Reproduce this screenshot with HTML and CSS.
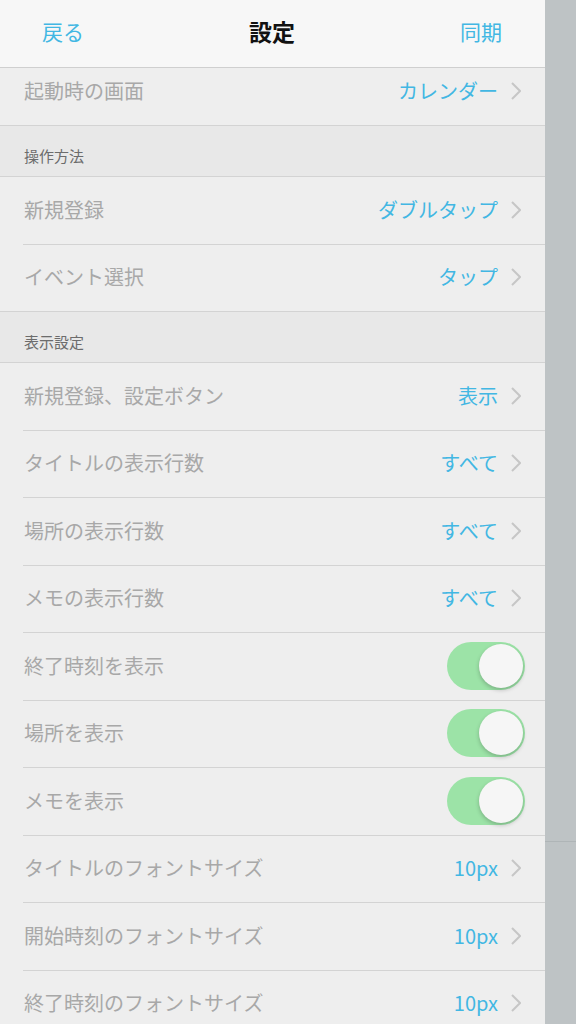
FILE: index.html
```html
<!DOCTYPE html>
<html>
<head>
    <title>設定</title>
    <link rel="stylesheet" href="styles.css">
</head>
<body>
    <div class="screen">
        <div class="panel">
            <div class="navbar">
                <span class="nav-btn">戻る</span>
                <span class="nav-title">設定</span>
                <span class="nav-btn">同期</span>
            </div>

            <div class="row row-partial last">
                <span class="label">起動時の画面</span>
                <span class="value">カレンダー</span>
                <svg class="chevron" viewBox="0 0 10 18"><polyline points="1,1 9,9 1,17"/></svg>
            </div>

            <div class="section-head">操作方法</div>
            <div class="row">
                <span class="label">新規登録</span>
                <span class="value">ダブルタップ</span>
                <svg class="chevron" viewBox="0 0 10 18"><polyline points="1,1 9,9 1,17"/></svg>
            </div>
            <div class="row last">
                <span class="label">イベント選択</span>
                <span class="value">タップ</span>
                <svg class="chevron" viewBox="0 0 10 18"><polyline points="1,1 9,9 1,17"/></svg>
            </div>

            <div class="section-head">表示設定</div>
            <div class="row">
                <span class="label">新規登録、設定ボタン</span>
                <span class="value">表示</span>
                <svg class="chevron" viewBox="0 0 10 18"><polyline points="1,1 9,9 1,17"/></svg>
            </div>
            <div class="row">
                <span class="label">タイトルの表示行数</span>
                <span class="value">すべて</span>
                <svg class="chevron" viewBox="0 0 10 18"><polyline points="1,1 9,9 1,17"/></svg>
            </div>
            <div class="row">
                <span class="label">場所の表示行数</span>
                <span class="value">すべて</span>
                <svg class="chevron" viewBox="0 0 10 18"><polyline points="1,1 9,9 1,17"/></svg>
            </div>
            <div class="row">
                <span class="label">メモの表示行数</span>
                <span class="value">すべて</span>
                <svg class="chevron" viewBox="0 0 10 18"><polyline points="1,1 9,9 1,17"/></svg>
            </div>
            <div class="row">
                <span class="label">終了時刻を表示</span>
                <span class="toggle on"><span class="knob"></span></span>
            </div>
            <div class="row">
                <span class="label">場所を表示</span>
                <span class="toggle on"><span class="knob"></span></span>
            </div>
            <div class="row">
                <span class="label">メモを表示</span>
                <span class="toggle on"><span class="knob"></span></span>
            </div>
            <div class="row">
                <span class="label">タイトルのフォントサイズ</span>
                <span class="value">10px</span>
                <svg class="chevron" viewBox="0 0 10 18"><polyline points="1,1 9,9 1,17"/></svg>
            </div>
            <div class="row">
                <span class="label">開始時刻のフォントサイズ</span>
                <span class="value">10px</span>
                <svg class="chevron" viewBox="0 0 10 18"><polyline points="1,1 9,9 1,17"/></svg>
            </div>
            <div class="row">
                <span class="label">終了時刻のフォントサイズ</span>
                <span class="value">10px</span>
                <svg class="chevron" viewBox="0 0 10 18"><polyline points="1,1 9,9 1,17"/></svg>
            </div>
        </div>
        <div class="backdrop">
            <div class="backdrop-line"></div>
        </div>
    </div>
</body>
</html>
```

FILE: styles.css
```css
body { margin: 0; font-family: "Noto Sans CJK JP", "Noto Sans", sans-serif; background: #bec3c5; overflow: hidden; }
.screen { display: flex; height: 1024px; overflow: hidden; }
.panel { width: 545px; flex-shrink: 0; background: #ededed; overflow: hidden; }
.backdrop { flex: 1; background: #bec3c5; padding-top: 841px; }
.backdrop-line { border-top: 1px solid #afb5b7; }

.navbar { height: 68px; box-sizing: border-box; background: #f7f7f7; border-bottom: 1px solid #cfcfcf; display: flex; align-items: center; justify-content: space-between; padding: 0 43px 4px 42px; line-height: 1; }
.nav-btn { font-size: 21px; color: #42b7e3; }
.nav-title { font-size: 23px; font-weight: bold; color: #111; }

.row { height: 67.5px; box-sizing: border-box; display: flex; align-items: center; padding: 0 24px 2px; position: relative; background: #eeeeee; line-height: 1; }
.row::after { content: ""; position: absolute; left: 23px; right: 0; bottom: 0; border-bottom: 1px solid #d3d3d3; }
.row.last::after { left: 0; }
.row-partial { height: 58px; padding-bottom: 12px; }

.label { flex: 1; font-size: 20px; color: #a8a8a8; }
.value { font-size: 20px; color: #42b7e3; }
.chevron { width: 10px; height: 18px; margin-left: 13px; fill: none; stroke: #c6c6c6; stroke-width: 2; }

.section-head { height: 51px; box-sizing: border-box; display: flex; align-items: flex-end; padding: 0 24px 10px; font-size: 15px; color: #6c6c6c; background: #e8e8e8; border-bottom: 1px solid #d3d3d3; }

.toggle { width: 78px; height: 48px; border-radius: 24px; background: #9ce3a7; display: flex; align-items: center; justify-content: flex-end; padding: 2px; box-sizing: border-box; margin-right: -4px; }
.knob { width: 44px; height: 44px; border-radius: 50%; background: #f6f6f6; box-shadow: 0 2px 4px rgba(0, 0, 0, 0.22); }
```
